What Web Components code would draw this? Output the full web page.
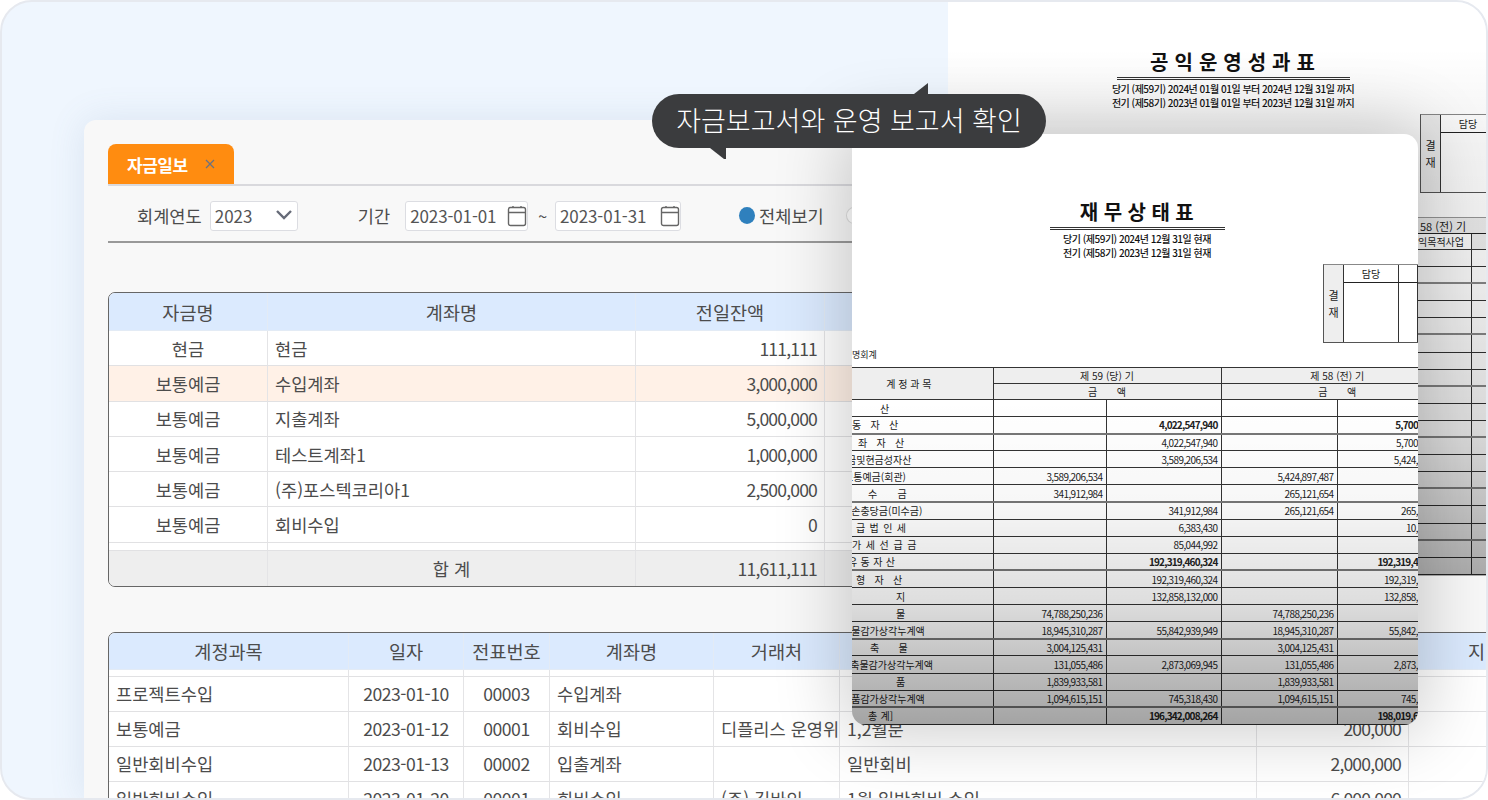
<!DOCTYPE html>
<html lang="ko">
<head>
<meta charset="utf-8">
<title>자금일보</title>
<style>
	html, body { margin: 0; background: #fff; }
	body { font-family: "Noto Sans CJK KR", "Noto Sans", sans-serif; }
</style>
</head>
<body>

<report-stage>
	<fund-window></fund-window>

	<report-sheet kind="back">
		<span slot="title">공익운영성과표</span>
		<span slot="sub">당기 (제59기) 2024년 01월 01일 부터 2024년 12월 31일 까지</span>
		<span slot="sub">전기 (제58기) 2023년 01월 01일 부터 2023년 12월 31일 까지</span>
		<approval-box slot="body" kind="back"></approval-box>
		<side-strip slot="body"></side-strip>
	</report-sheet>

	<report-sheet kind="front">
		<span slot="title">재무상태표</span>
		<span slot="sub">당기 (제59기) 2024년 12월 31일 현재</span>
		<span slot="sub">전기 (제58기) 2023년 12월 31일 현재</span>
		<approval-box slot="body" kind="front"></approval-box>
		<balance-table slot="body"></balance-table>
	</report-sheet>

	<speech-bubble>자금보고서와 운영 보고서 확인</speech-bubble>
</report-stage>

<script>
const FUND_TABLE = {
	cols: [159, 368, 189, 573],
	align: ['c', 'l', 'r', 'r'],
	head: ['자금명', '계좌명', '전일잔액', ''],
	headHeight: 38,
	rowHeight: 35.3,
	spacer: 8,
	rows: [
		['현금', '현금', '111,111', ''],
		['보통예금', '수입계좌', '3,000,000', '', 'hot'],
		['보통예금', '지출계좌', '5,000,000', ''],
		['보통예금', '테스트계좌1', '1,000,000', ''],
		['보통예금', '(주)포스텍코리아1', '2,500,000', ''],
		['보통예금', '회비수입', '0', ''],
	],
	foot: ['', '합 계', '11,611,111', ''],
};

const DETAIL_TABLE = {
	cols: [240, 115, 86, 164, 126, 417, 152, 200],
	align: ['l', 'd', 'd', 'l', 'l', 'l', 'r', 'r'],
	head: ['계정과목', '일자', '전표번호', '계좌명', '거래처', '', '', ''],
	headHeight: 37,
	rowHeight: 35,
	spacerFirst: 7,
	rows: [
		['프로젝트수입', '2023-01-10', '00003', '수입계좌', '', '', '', ''],
		['보통예금', '2023-01-12', '00001', '회비수입', '디플리스 운영위', '1,2월분', '200,000', ''],
		['일반회비수입', '2023-01-13', '00002', '입출계좌', '', '일반회비', '2,000,000', ''],
		['일반회비수입', '2023-01-20', '00001', '회비수입', '(주) 길바인', '1월 일반회비 수입', '6,000,000', ''],
	],
};

// label, indent, the four amount columns, bold flag, word gap of the label
const BALANCE_ROWS = [
	['산', 28, '', '', '', ''],
	['동 자 산', 0, '', '4,022,547,940', '', '5,700', 1],
	['좌 자 산', 6, '', '4,022,547,940', '', '5,700'],
	['금및현금성자산', -5, '', '3,589,206,534', '', '5,424,'],
	['보통예금(회관)', -8, '3,589,206,534', '', '5,424,897,487', ''],
	['수 금', 16, '341,912,984', '', '265,121,654', '', 0, 17.6],
	['대손충당금(미수금)', -10, '', '341,912,984', '265,121,654', '265,'],
	['급 법 인 세', 4, '', '6,383,430', '', '10,', 0, 1.6],
	['가 세 선 급 금', 0, '', '85,044,992', '', '', 0, 1.8],
	['유 동 자 산', -4, '', '192,319,460,324', '', '192,319,4', 1, .6],
	['형 자 산', 4, '', '192,319,460,324', '', '192,319,'],
	['지', 44, '', '132,858,132,000', '', '132,858,'],
	['물', 44, '74,788,250,236', '', '74,788,250,236', ''],
	['건물감가상각누계액', -10, '18,945,310,287', '55,842,939,949', '18,945,310,287', '55,842,'],
	['축 물', 18, '3,004,125,431', '', '3,004,125,431', '', 0, 16.6],
	['구축물감가상각누계액', -11, '131,055,486', '2,873,069,945', '131,055,486', '2,873,'],
	['품', 44, '1,839,933,581', '', '1,839,933,581', ''],
	['비품감가상각누계액', -10, '1,094,615,151', '745,318,430', '1,094,615,151', '745,'],
	['총 계]', 16, '', '196,342,008,264', '', '198,019,6', 1, .6],
];

class ReportStage extends HTMLElement {
	constructor() {
		super();
		this.attachShadow({ mode: 'open' }).innerHTML = `
			<style>
				:host {
					display: block;
					position: relative;
					box-sizing: border-box;
					width: 1488px;
					height: 800px;
					border: 2px solid #e6e9ef;
					border-radius: 32px;
					overflow: hidden;
					background: #eff6fe;
				}
			</style>
			<slot></slot>
		`;
	}
}

class SpeechBubble extends HTMLElement {
	constructor() {
		super();
		this.attachShadow({ mode: 'open' }).innerHTML = `
			<style>
				:host {
					position: absolute;
					left: 650px;
					top: 92px;
					display: block;
					z-index: 5;
					width: 394px;
					height: 54px;
					line-height: 52px;
					text-align: center;
					border-radius: 27px;
					background: #3b3c3e;
					color: #fff;
					font-size: 27px;
					font-weight: 300;
					white-space: nowrap;
				}
				svg { position: absolute; fill: #3b3c3e; }
				.up { left: 262px; top: -11px; }
				.down { left: 58px; top: 54px; }
			</style>
			<svg class="up" width="16" height="11"><path d="M0 11 L14 0 L14 11 Z"/></svg>
			<slot></slot>
			<svg class="down" width="16" height="11"><path d="M0 0 H16 V11 H14 Z"/></svg>
		`;
	}
}

class DateField extends HTMLElement {
	constructor() {
		super();
		this.attachShadow({ mode: 'open' }).innerHTML = `
			<style>
				:host {
					display: flex;
					align-items: center;
					justify-content: space-between;
					box-sizing: border-box;
					height: 30px;
					padding: 0 0 0 4px;
					background: #fff;
					border: 1px solid #dcdde2;
					border-radius: 3px;
					font-size: 17px;
					letter-spacing: -.1px;
					color: #555;
				}
			</style>
			<span id="value"></span>
			<svg width="20" height="22" viewBox="0 0 20 22" fill="none" stroke="#666" stroke-width="1.4">
				<rect x="1.5" y="2.5" width="17" height="18" rx="2"/>
				<path d="M1.5 7.5 H18.5 M6 1 V3 M14 1 V3"/>
			</svg>
		`;
	}

	connectedCallback() {
		this.shadowRoot.getElementById('value').textContent = this.getAttribute('value');
	}
}

class LedgerTable extends HTMLElement {
	constructor() {
		super();
		this.attachShadow({ mode: 'open' });
	}

	set data(d) {
		const cell = (text, i) => `<td class="${d.align[i]}">${text}</td>`;
		const rows = d.rows.map((row) => {
			const hot = row[d.cols.length] === 'hot';
			return `<tr class="${hot ? 'hot' : ''}" style="height:${d.rowHeight}px">${row.slice(0, d.cols.length).map(cell).join('')}</tr>`;
		}).join('');
		const blank = d.cols.map(() => '<td></td>').join('');

		this.shadowRoot.innerHTML = `
			<style>
				:host {
					display: block;
					box-sizing: border-box;
					border: 1px solid #666;
					border-radius: 7px;
					overflow: hidden;
					background: #fff;
					font-size: 17.6px;
					color: #4c4c4c;
				}
				table { border-collapse: separate; border-spacing: 0; table-layout: fixed; width: ${d.cols.reduce((a, b) => a + b, 0)}px; }
				td, th {
					box-sizing: border-box;
					padding: 0 7px;
					border-right: 1px solid #e4e4e6;
					border-bottom: 1px solid #e1e1e3;
					white-space: nowrap;
					overflow: hidden;
					font-weight: 400;
				}
				th { background: #dbeafe; text-align: center; border-color: #e3ebf5; font-size: 18.6px; }
				.c { text-align: center; }
				.d { text-align: center; letter-spacing: -.5px; }
				.l { text-align: left; }
				.r { text-align: right; letter-spacing: -.85px; }
				.hot td { background: #fff1e7; }
				.foot td { background: #eeeeee; border-bottom: 0; }
				.foot td:nth-child(2) { text-align: center; }
				.gap td { padding: 0; font-size: 0; }
				.far { text-align: left; padding-left: 59px; }
			</style>
			<table>
				<colgroup>${d.cols.map((w) => `<col style="width:${w}px">`).join('')}</colgroup>
				<tr style="height:${d.headHeight}px">${d.head.map((h) => `<th>${h}</th>`).join('')}</tr>
				${d.spacerFirst ? `<tr class="gap" style="height:${d.spacerFirst}px">${blank}</tr>` : ''}
				${rows}
				${d.spacer ? `<tr class="gap" style="height:${d.spacer}px">${blank}</tr>` : ''}
				${d.foot ? `<tr class="foot" style="height:35px">${d.foot.map(cell).join('')}</tr>` : ''}
			</table>
		`;

		// the last column's title runs off the right edge of the picture
		if (this.hasAttribute('far-title')) {
			const last = this.shadowRoot.querySelector('tr th:last-child');
			last.className = 'far';
			last.textContent = this.getAttribute('far-title');
		}
	}
}

class FundWindow extends HTMLElement {
	constructor() {
		super();
		this.attachShadow({ mode: 'open' }).innerHTML = `
			<style>
				:host {
					display: block;
					box-sizing: border-box;
					margin: 118px 0 0 82px;
					height: 680px;
					padding: 24px 0 0 24px;
					background: #f8f8f8;
					border-radius: 12px 0 0 0;
					box-shadow: 0 0 36px rgba(90, 120, 165, .14);
					overflow: hidden;
					color: #4c4c4c;
					font-size: 17.6px;
				}
				.tabs { height: 40px; border-bottom: 2px solid #d9d9dd; }
				.tab {
					display: flex;
					align-items: center;
					width: 126px;
					height: 40px;
					box-sizing: border-box;
					padding-left: 19px;
					background: #ff8c10;
					border-radius: 8px 8px 0 0;
					color: #fff;
					font-size: 17px;
					font-weight: 700;
					letter-spacing: -.5px;
				}
				.tab svg { margin-left: 16px; }
				.filter {
					display: flex;
					align-items: center;
					box-sizing: border-box;
					height: 57px;
					padding: 4px 0 0 29px;
					border-bottom: 2px solid #999;
				}
				.label { margin-right: 8px; }
				.select {
					display: flex;
					align-items: center;
					justify-content: space-between;
					box-sizing: border-box;
					width: 88px;
					height: 30px;
					padding: 0 3px 0 4px;
					background: #fff;
					border: 1px solid #dcdde2;
					border-radius: 3px;
					font-size: 17px;
					color: #555;
				}
				.select svg { margin-top: -2px; }
				.radio { width: 16px; height: 17px; border-radius: 50%; background: #2f80bd; margin: 0 4px 0 58px; }
				.radio.off { background: #fff; border: 1px solid #ddd; box-sizing: border-box; margin: 0 0 0 22px; }
				ledger-table.fund { width: 1290px; margin-top: 49px; }
				ledger-table.detail { width: 1520px; margin-top: 45px; }
			</style>
			<div class="tabs">
				<div class="tab">자금일보
					<svg width="12" height="12" viewBox="0 0 12 12" fill="none" stroke="#6b7280" stroke-width="1.3"><path d="M2 2 L10 10 M10 2 L2 10"/></svg>
				</div>
			</div>
			<div class="filter">
				<span class="label">회계연도</span>
				<div class="select">2023
					<svg width="20" height="12" viewBox="0 0 20 12" fill="none" stroke="#666b78" stroke-width="2.4"><path d="M3 2 L10 9 L17 2"/></svg>
				</div>
				<span class="label" style="margin-left:60px;margin-right:15px">기간</span>
				<date-field value="2023-01-01" style="width:123px"></date-field>
				<span style="margin:0 8px 0 10px;font-size:16px">~</span>
				<date-field value="2023-01-31" style="width:126px"></date-field>
				<span class="radio"></span><span>전체보기</span>
				<span class="radio off"></span>
			</div>
			<ledger-table class="fund"></ledger-table>
			<ledger-table class="detail" far-title="지"></ledger-table>
		`;
	}

	connectedCallback() {
		this.shadowRoot.querySelector('.fund').data = FUND_TABLE;
		this.shadowRoot.querySelector('.detail').data = DETAIL_TABLE;
	}
}

class ReportSheet extends HTMLElement {
	constructor() {
		super();
		this.attachShadow({ mode: 'open' }).innerHTML = `
			<style>
				:host {
					position: absolute;
					display: block;
					box-sizing: border-box;
					background: #fff;
					overflow: hidden;
					color: #111;
				}
				:host([kind="back"]) {
					left: 946px;
					top: 0;
					right: 0;
					height: 574px;
					padding: 47px 0 0 32px;
					z-index: 2;
				}
				:host([kind="front"]) {
					left: 850px;
					top: 132px;
					width: 566px;
					height: 591px;
					padding-top: 65px;
					padding-left: 4px;
					border-radius: 0 14px 14px 14px;
					box-shadow: 0 0 70px 8px rgba(0, 0, 0, .2);
					z-index: 3;
				}
				.head { display: flex; flex-direction: column; align-items: center; }
				.title {
					box-sizing: border-box;
					text-align: center;
					height: 31px;
					line-height: 26px;
					padding-left: 5px;
					border-bottom: 3px double #333;
					font-size: 20px;
					font-weight: 700;
					letter-spacing: 5.5px;
				}
				:host([kind="back"]) .title { width: 233px; letter-spacing: 6px; }
				:host([kind="front"]) .title { width: 175px; }
				.subs { margin-top: 2px; display: flex; flex-direction: column; align-items: center; }
				::slotted([slot="sub"]) {
					font-size: 10px;
					line-height: 14px;
					font-weight: 500;
					letter-spacing: -.5px;
					white-space: nowrap;
				}
				.shade { position: absolute; inset: 0; pointer-events: none; }
				:host([kind="back"]) .shade {
					background: linear-gradient(rgba(0,0,0,0) 8%, rgba(0,0,0,.05) 25%, rgba(0,0,0,.08) 50%, rgba(0,0,0,.15) 75%, rgba(0,0,0,.33) 100%);
				}
				:host([kind="front"]) .shade {
					background: linear-gradient(rgba(0,0,0,0) 45%, rgba(0,0,0,.03) 62%, rgba(0,0,0,.13) 79%, rgba(0,0,0,.36) 100%);
				}
			</style>
			<div class="head">
				<div class="title"><slot name="title"></slot></div>
				<div class="subs"><slot name="sub"></slot></div>
			</div>
			<slot name="body"></slot>
			<div class="shade"></div>
		`;
	}
}

class ApprovalBox extends HTMLElement {
	constructor() {
		super();
		const kind = this.getAttribute('kind');
		const cols = kind === 'back' ? '' : '<div class="top"></div>';
		const under = kind === 'back' ? '<div></div>' : '<div></div><div></div>';
		this.attachShadow({ mode: 'open' }).innerHTML = `
			<style>
				:host {
					display: grid;
					grid-template-rows: 18px 1fr;
					margin-top: 4px;
					height: 79px;
					border-top: 1px solid #888;
					border-left: 1px solid #555;
					border-bottom: 1px solid #555;
					box-sizing: border-box;
					font-size: 10px;
					color: #222;
				}
				:host([kind="back"]) { width: 76px; margin-left: 440px; grid-template-columns: 20px 1fr; }
				:host([kind="front"]) { width: 95px; margin-left: 467px; grid-template-columns: 20px 55px 1fr; }
				div { box-sizing: border-box; border-right: 1px solid #333; display: flex; align-items: center; justify-content: center; }
				.side {
					grid-row: 1 / 3;
					background: #eee;
					writing-mode: vertical-lr;
					text-orientation: upright;
					letter-spacing: 6px;
					padding-top: 6px;
					font-size: 11px;
				}
				.top { border-bottom: 1px solid #222; }
			</style>
			<div class="side">결재</div>
			<div class="top">담당</div>
			${cols}
			${under}
		`;
	}
}

class SideStrip extends HTMLElement {
	constructor() {
		super();
		const lines = Array.from({ length: 19 }, (_, i) => `<div class="row ${i % 3 === 1 ? 'soft' : ''}"></div>`).join('');
		this.attachShadow({ mode: 'open' }).innerHTML = `
			<style>
				:host {
					display: block;
					margin: 24px 0 0 438px;
					width: 68px;
					overflow: hidden;
					font-size: 11px;
					color: #222;
				}
				.band { height: 17px; line-height: 16px; padding-left: 2px; background: #eee; border-top: 1px solid #999; border-bottom: 1px solid #222; box-sizing: border-box; white-space: nowrap; }
				.sub { display: grid; grid-template-columns: 53px 1fr; height: 16px; line-height: 15px; box-sizing: border-box; border-bottom: 1px solid #333; white-space: nowrap; font-size: 10px; }
				.sub span:last-child { background: #eee; border-left: 1px solid #333; }
				.rows { background: linear-gradient(to right, transparent 53px, #333 53px, #333 54px, transparent 54px); }
				.row { box-sizing: border-box; height: 17.1px; border-bottom: 1px solid #333; }
				.row.soft { border-bottom: 2px solid #888; }
			</style>
			<div class="band">58 (전) 기</div>
			<div class="sub"><span>익목적사업</span><span></span></div>
			<div class="rows">${lines}</div>
		`;
	}
}

class BalanceTable extends HTMLElement {
	constructor() {
		super();
		const amount = (v, bold) => `<td class="n${bold ? ' b' : ''}">${v}</td>`;
		const rows = BALANCE_ROWS.map((r, i) => `
			<tr class="${i % 4 === 1 ? 'soft' : ''}">
				<td class="name"><span style="margin-left:${r[1]}px;word-spacing:${r[7] === undefined ? 6.5 : r[7]}px">${r[0]}</span></td>
				${amount(r[2], r[6])}${amount(r[3], r[6])}${amount(r[4], r[6])}
				<td class="n edge${r[6] ? ' b' : ''}">${r[5]}</td>
			</tr>`).join('');
		this.attachShadow({ mode: 'open' }).innerHTML = `
			<style>
				:host {
					display: block;
					margin-left: -4px;
					font-size: 10px;
					color: #222;
				}
				.unit { height: 24px; line-height: 12px; padding-top: 6px; box-sizing: border-box; font-size: 9px; overflow: hidden; }
				table { border-collapse: collapse; table-layout: fixed; width: 601px; }
				td { padding: 0 3px; height: 17.1px; line-height: 15px; border: 1px solid #333; white-space: nowrap; overflow: hidden; box-sizing: border-box; }
				tr.soft td { border-bottom: 2px solid #777; }
				.top td { height: 16px; text-align: center; background: #eee; }
				.top .head { padding-right: 30px; text-align: center; }
				td:first-child { border-left: 0; }
				td:last-child { border-right: 0; }
				.n { text-align: right; letter-spacing: -.6px; }
				.b { font-weight: 700; letter-spacing: -.8px; }
				.edge { padding-right: 35px; }
				.name { padding: 0; }
				.name span { display: inline-block; }
			</style>
			<div class="unit">명회계</div>
			<table>
				<colgroup><col style="width:141px"><col style="width:113px"><col style="width:115px"><col style="width:116px"><col style="width:116px"></colgroup>
				<tr class="top"><td rowspan="2" class="head">계 정 과 목</td><td colspan="2">제 59 (당) 기</td><td colspan="2">제 58 (전) 기</td></tr>
				<tr class="top"><td colspan="2">금 &nbsp; &nbsp; &nbsp; 액</td><td colspan="2">금 &nbsp; &nbsp; &nbsp; 액</td></tr>
				${rows}
			</table>
		`;
	}
}

customElements.define('report-stage', ReportStage);
customElements.define('speech-bubble', SpeechBubble);
customElements.define('date-field', DateField);
customElements.define('ledger-table', LedgerTable);
customElements.define('fund-window', FundWindow);
customElements.define('report-sheet', ReportSheet);
customElements.define('approval-box', ApprovalBox);
customElements.define('side-strip', SideStrip);
customElements.define('balance-table', BalanceTable);
</script>
</body>
</html>
